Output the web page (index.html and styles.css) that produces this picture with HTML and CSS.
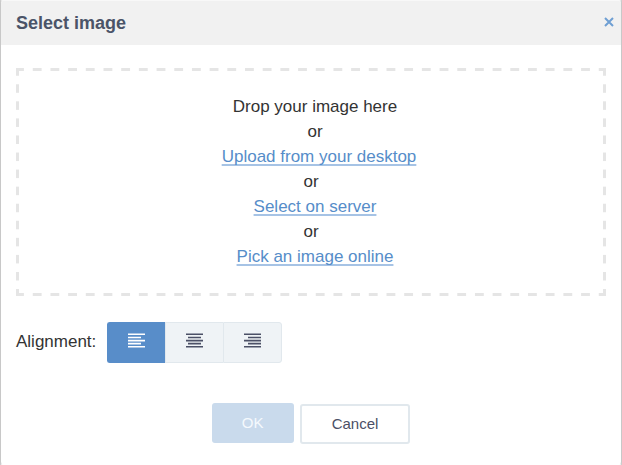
FILE: index.html
```html
<!DOCTYPE html>
<html lang="en">
<head>
<meta charset="utf-8">
<meta name="viewport" content="width=device-width, initial-scale=1">
<title>Select image</title>
<link rel="stylesheet" href="styles.css">
</head>
<body>
<main class="dialog" role="dialog" aria-labelledby="dialog-title">
  <header class="dialog-header">
    <h1 class="dialog-title" id="dialog-title">Select image</h1>
    <button class="close" type="button" aria-label="Close">
      <svg width="10" height="10" viewBox="0 0 10 10" aria-hidden="true"><path d="M1 1l8 8M9 1L1 9"/></svg>
    </button>
  </header>
  <form class="dialog-body">
    <div class="dropzone">
      <p class="line indent">Drop your image here</p>
      <p class="line indent">or</p>
      <p class="line indent-wide"><a class="link" href="#">Upload from your desktop</a></p>
      <p class="line">or</p>
      <p class="line indent"><a class="link" href="#">Select on server</a></p>
      <p class="line">or</p>
      <p class="line indent"><a class="link" href="#">Pick an image online</a></p>
    </div>
    <div class="field">
      <span class="field-label" id="align-label">Alignment:</span>
      <div class="segments" role="group" aria-labelledby="align-label">
        <button class="segment active" type="button" aria-label="Left" aria-pressed="true">
          <svg width="18" height="16" viewBox="0 0 18 16" aria-hidden="true"><path d="M0 1.300h17M0 4.500h13M0 7.600h17M0 10.600h13M0 13.800h17"/></svg>
        </button>
        <button class="segment" type="button" aria-label="Center" aria-pressed="false">
          <svg width="18" height="16" viewBox="0 0 18 16" aria-hidden="true"><path d="M0 1.300h17M2 4.500h13M0 7.600h17M2 10.600h13M0 13.800h17"/></svg>
        </button>
        <button class="segment" type="button" aria-label="Right" aria-pressed="false">
          <svg width="18" height="16" viewBox="0 0 18 16" aria-hidden="true"><path d="M0 1.300h17M4 4.500h13M0 7.600h17M4 10.600h13M0 13.800h17"/></svg>
        </button>
      </div>
    </div>
    <div class="actions">
      <button class="btn primary" type="submit" disabled>OK</button>
      <button class="btn secondary" type="button">Cancel</button>
    </div>
  </form>
</main>
</body>
</html>
```
FILE: styles.css
```css
* {
  box-sizing: border-box;
}

body {
  margin: 0;
  background: #ccc;
  color: #333;
  font: 17px/25px "Liberation Sans", Arial, sans-serif;
}

button {
  margin: 0;
  font-family: inherit;
}

.dialog {
  min-height: 100vh;
  border: 1px solid #c8c8c8;
  border-top-color: #f8f8f8;
  border-bottom-color: #fff;
  border-radius: 3px;
  background: #fff;
}

.dialog-header {
  display: flex;
  align-items: center;
  justify-content: space-between;
  height: 44px;
  padding: 0 7px 0 15px;
  border-radius: 2px 2px 0 0;
  background: #f1f1f1;
}

.dialog-title {
  margin: 0;
  color: #4b5468;
  font-size: 18px;
  line-height: 24px;
}

.close {
  display: flex;
  padding: 0 0 2px;
  border: 0;
  background: none;
}

.close svg {
  fill: none;
  stroke: #6f9fd3;
  stroke-width: 2;
}

.dialog-body {
  padding: 23px 15px 20px;
}

/* Long dashes: each edge repeats a tile into the transparent border. */
.dropzone {
  --dash: #e5e5e5 25%, transparent 25% 75%, #e5e5e5 75%;
  padding: 23px 0 24px;
  border: 3px solid transparent;
  background-image:
    linear-gradient(90deg, var(--dash)),
    linear-gradient(90deg, var(--dash)),
    linear-gradient(var(--dash)),
    linear-gradient(var(--dash));
  background-position: left top -3px, left bottom -3px, left -3px top, right -3px top;
  background-size: calc(100% / 33) 3px, calc(100% / 33) 3px, 3px calc(100% / 13), 3px calc(100% / 13);
  background-repeat: repeat-x, repeat-x, repeat-y, repeat-y;
  text-align: center;
}

.line {
  margin: 0;
}

.indent {
  padding-left: 8px;
}

.indent-wide {
  padding-left: 16px;
}

.link {
  color: #568dc9;
  text-decoration: underline 2px #a6c3e5;
  text-decoration-skip-ink: none;
  text-underline-offset: 2px;
}

.field {
  display: flex;
  align-items: center;
  gap: 11px;
  margin-top: 26px;
}

.field-label {
  padding-bottom: 3px;
}

.segments {
  display: flex;
}

.segment {
  display: flex;
  align-items: center;
  justify-content: center;
  width: 58px;
  height: 41px;
  padding: 0 0 3px;
  border: 1px solid #e1e8ed;
  border-right-width: 0;
  background: #eff3f6;
  color: #4b5066;
}

.segment:first-child {
  border-radius: 3px 0 0 3px;
}

.segment:last-child {
  width: 59px;
  border-right-width: 1px;
  border-radius: 0 3px 3px 0;
}

.segment.active {
  border-color: #588dc9;
  background: #588dc9;
  color: #fff;
}

.segment svg {
  fill: none;
  stroke: currentColor;
  stroke-width: 1.6;
}

.actions {
  display: flex;
  justify-content: center;
  gap: 6px;
  margin-top: 40px;
}

.btn {
  height: 40px;
  padding: 0 30px;
  border-radius: 3px;
  font-size: 15px;
  line-height: 20px;
}

.primary {
  min-width: 82px;
  border: 0;
  background: #c9daec;
  color: #f5f9fd;
}

.secondary {
  margin-top: 1px;
  border: 2px solid #e1e8ed;
  background: #fff;
  color: #4b5066;
}
```
